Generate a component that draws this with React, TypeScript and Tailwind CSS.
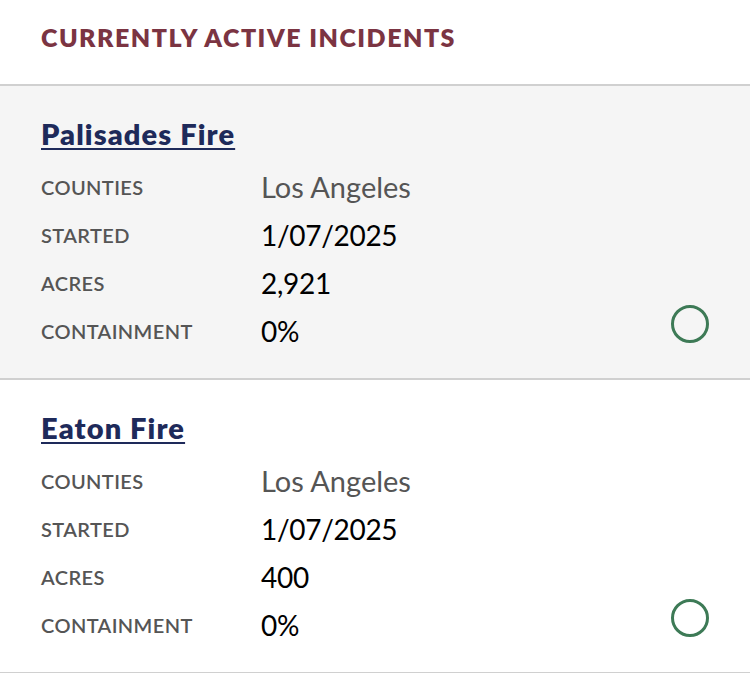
import React from "react";

type Incident = {
  name: string;
  counties: string;
  started: string;
  acres: string;
  containment: string;
  shaded: boolean;
};

const incidents: Incident[] = [
  { name: "Palisades Fire", counties: "Los Angeles", started: "1/07/2025", acres: "2,921", containment: "0%", shaded: true },
  { name: "Eaton Fire", counties: "Los Angeles", started: "1/07/2025", acres: "400", containment: "0%", shaded: false },
];

function Row({ label, value, muted }: { label: string; value: string; muted?: boolean }) {
  return (
    <div className="flex h-[48px] items-center">
      <div className="w-[220px] text-[20px] font-semibold tracking-[0.4px] text-[#555555]">{label}</div>
      <div className={muted ? "text-[29px] text-[#555555]" : "text-[28px] tracking-[-0.3px] text-black"}>{value}</div>
    </div>
  );
}

function Panel({ inc }: { inc: Incident }) {
  return (
    <div className={(inc.shaded ? "bg-[#f5f5f5] " : "bg-white ") + "relative border-b-2 border-[#d0d0d0] pl-[41px] pr-[41px] pt-[28px] pb-[23px]"}>
      <div className="flex h-[40px] items-center">
        <a className="text-[29px] font-extrabold tracking-[1.1px] text-[#1e2a5a] underline decoration-[2px] underline-offset-[3px]">{inc.name}</a>
      </div>
      <div className="mt-[9px] flex items-end justify-between">
        <div className="flex flex-col">
          <Row label="COUNTIES" value={inc.counties} muted />
          <Row label="STARTED" value={inc.started} />
          <Row label="ACRES" value={inc.acres} />
          <Row label="CONTAINMENT" value={inc.containment} />
        </div>
        <div className="mb-[12px] h-[38px] w-[38px] rounded-full border-[3px] border-[#3d7a56]" />
      </div>
    </div>
  );
}

export default function App() {
  return (
    <div className="w-[750px] bg-white" style={{ fontFamily: "Lato, 'Open Sans', sans-serif" }}>
      <div className="flex h-[86px] items-center border-b-2 border-[#d0d0d0] pl-[41px] pb-[8px]">
        <h2 className="text-[25px] font-extrabold tracking-[1.5px] text-[#7b3442]">CURRENTLY ACTIVE INCIDENTS</h2>
      </div>
      {incidents.map((inc) => (
        <Panel key={inc.name} inc={inc} />
      ))}
    </div>
  );
}
